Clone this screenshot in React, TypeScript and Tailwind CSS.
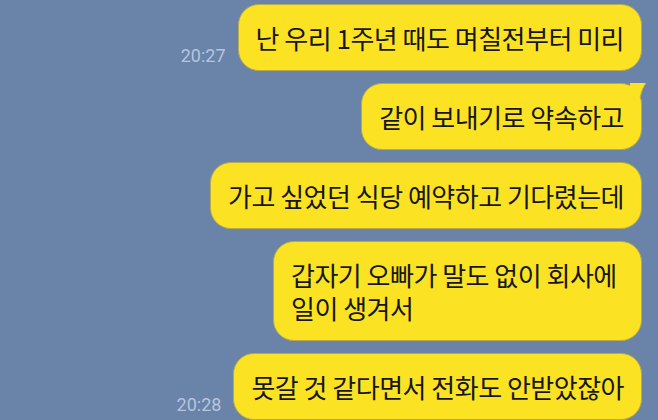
import React from "react";

type Message = {
  lines: string[];
  time?: string;
  tail?: boolean;
  width?: string;
};

const messages: Message[] = [
  { lines: ["난 우리 1주년 때도 며칠전부터 미리"], time: "20:27" },
  { lines: ["같이 보내기로 약속하고"], tail: true },
  { lines: ["가고 싶었던 식당 예약하고 기다렸는데"] },
  { lines: ["갑자기 오빠가 말도 없이 회사에", "일이 생겨서"], width: "w-[369px]" },
  { lines: ["못갈 것 같다면서 전화도 안받았잖아"], time: "20:28" },
];

function Bubble({ message }: { message: Message }) {
  return (
    <div
      className={`relative rounded-[21px] border border-[#b9ab4c] bg-[#fbe324] px-[17px] py-4 text-[26px] leading-[33px] tracking-[-0.5px] text-[#161616] ${message.width ?? ""}`}
    >
      {message.tail && (
        <svg
          className="absolute -top-px right-[-7px]"
          width="18"
          height="16"
          viewBox="0 0 18 16"
        >
          <path d="M0 0 L16 0 Q 12 5 10 15 L 0 15 Z" fill="#fbe324" />
          <path d="M16 0 Q 12 5 10 15" fill="none" stroke="#b9ab4c" strokeWidth="1" />
        </svg>
      )}
      {message.lines.map((line, i) => (
        <div key={i} className="whitespace-nowrap">
          {line}
        </div>
      ))}
    </div>
  );
}

export default function App() {
  return (
    <div
      className="flex h-[420px] w-[658px] flex-col items-end gap-3 overflow-hidden bg-[#6a83a9] pr-4 pt-1"
      style={{ fontFamily: '"Noto Sans CJK KR", "Noto Sans", sans-serif' }}
    >
      {messages.map((m, i) => (
        <div key={i} className="flex items-end gap-3">
          {m.time && (
            <span className="mb-1.5 font-['Roboto',sans-serif] text-[18px] leading-none text-[#b6c5df]">
              {m.time}
            </span>
          )}
          <Bubble message={m} />
        </div>
      ))}
    </div>
  );
}
